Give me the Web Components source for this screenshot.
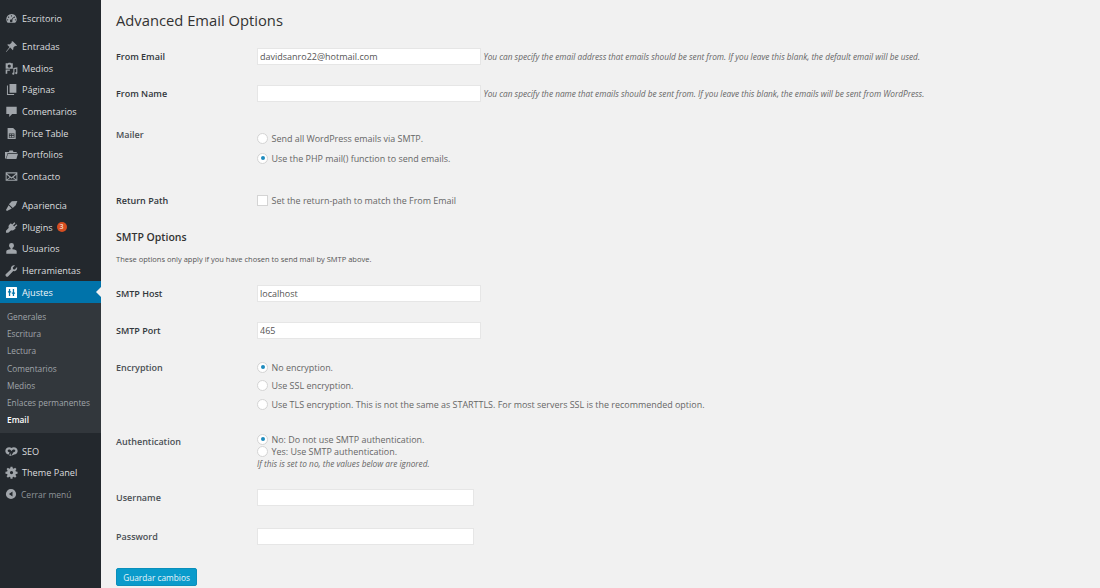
<!DOCTYPE html>
<html lang="es">
<head>
<meta charset="utf-8">
<title>Advanced Email Options</title>
<style>
  html, body { margin: 0; height: 100%; background: #f1f1f1; }
  body { font-family: "Open Sans", "Noto Sans", sans-serif; overflow: hidden; }
</style>
</head>
<body>
<admin-page>
  <admin-menu slot="menu">
    <menu-item icon="dashboard" style="margin-bottom:6px">Escritorio</menu-item>
    <menu-item icon="pin">Entradas</menu-item>
    <menu-item icon="media">Medios</menu-item>
    <menu-item icon="pages">Páginas</menu-item>
    <menu-item icon="comments">Comentarios</menu-item>
    <menu-item icon="doc">Price Table</menu-item>
    <menu-item icon="folder">Portfolios</menu-item>
    <menu-item icon="mail" style="margin-bottom:7px">Contacto</menu-item>
    <menu-item icon="brush">Apariencia</menu-item>
    <menu-item icon="plug" badge="3">Plugins</menu-item>
    <menu-item icon="user">Usuarios</menu-item>
    <menu-item icon="wrench">Herramientas</menu-item>
    <menu-item icon="settings" current>Ajustes</menu-item>
    <sub-menu>
      <sub-item>Generales</sub-item>
      <sub-item>Escritura</sub-item>
      <sub-item>Lectura</sub-item>
      <sub-item>Comentarios</sub-item>
      <sub-item>Medios</sub-item>
      <sub-item>Enlaces permanentes</sub-item>
      <sub-item current>Email</sub-item>
    </sub-menu>
    <menu-item icon="seo">SEO</menu-item>
    <menu-item icon="gear">Theme Panel</menu-item>
    <menu-item icon="collapse" muted>Cerrar menú</menu-item>
  </admin-menu>

  <form-heading level="1">Advanced Email Options</form-heading>
  <form-row label="From Email" height="37" bold>
    <text-field value="davidsanro22@hotmail.com"></text-field>
    <field-hint>You can specify the email address that emails should be sent from. If you leave this blank, the default email will be used.</field-hint>
  </form-row>
  <form-row label="From Name" height="38.5" bold>
    <text-field></text-field>
    <field-hint>You can specify the name that emails should be sent from. If you leave this blank, the emails will be sent from WordPress.</field-hint>
  </form-row>
  <form-row label="Mailer" height="69" stack label-top="12.5" top="15" option="20">
    <choice-option>Send all WordPress emails via SMTP.</choice-option>
    <choice-option checked>Use the PHP mail() function to send emails.</choice-option>
  </form-row>
  <form-row label="Return Path" height="37" bold>
    <choice-option square>Set the return-path to match the From Email</choice-option>
  </form-row>
  <form-heading level="2">SMTP Options</form-heading>
  <form-note>These options only apply if you have chosen to send mail by SMTP above.</form-note>
  <form-row label="SMTP Host" height="37" bold>
    <text-field value="localhost"></text-field>
  </form-row>
  <form-row label="SMTP Port" height="37" bold>
    <text-field value="465"></text-field>
  </form-row>
  <form-row label="Encryption" height="73.5" stack label-top="10" top="9.25" option="18.5">
    <choice-option checked>No encryption.</choice-option>
    <choice-option>Use SSL encryption.</choice-option>
    <choice-option>Use TLS encryption. This is not the same as STARTTLS. For most servers SSL is the recommended option.</choice-option>
  </form-row>
  <form-row label="Authentication" height="55.5" stack label-top="10.5" top="11" option="12">
    <choice-option checked>No: Do not use SMTP authentication.</choice-option>
    <choice-option>Yes: Use SMTP authentication.</choice-option>
    <field-hint block>If this is set to no, the values below are ignored.</field-hint>
  </form-row>
  <form-row label="Username" height="39">
    <text-field short></text-field>
  </form-row>
  <form-row label="Password" height="39">
    <text-field short></text-field>
  </form-row>
  <primary-button>Guardar cambios</primary-button>
</admin-page>

<script>
const ICONS = {
  dashboard: '<path fill-rule="evenodd" d="M10 3a8 8 0 0 0-8 8c0 2.200.9 4.200 2.300 5.600h11.400A8 8 0 0 0 10 3zm0 2a1 1 0 1 1 0 2 1 1 0 0 1 0-2zM5.500 7a1 1 0 1 1 0 2 1 1 0 0 1 0-2zm9 0a1 1 0 1 1 0 2 1 1 0 0 1 0-2zM4 11a1 1 0 1 1 0 2 1 1 0 0 1 0-2zm12 0a1 1 0 1 1 0 2 1 1 0 0 1 0-2zm-3.200-3.400.9.6-2.600 4a2 2 0 1 1-1-.6z"/>',
  pin: '<path d="M11.900 2 18.500 8.600l-1.800.9-1-.6-3 3c.5 1.400.3 2.700-.6 3.800L8 11.600 2 18.500l-.6-.6 5.600-7.200L3.300 7.400c1.100-.9 2.400-1.100 3.800-.6l3.300-3-.6-1z"/>',
  media: '<path fill-rule="evenodd" d="M1 2h3.500l1-1h3l1 1H12v8.500H1zm5.500 1.800a2.500 2.500 0 1 0 0 5 2.500 2.500 0 0 0 0-5zM1 11.500h6.500v2H3.500V18H1zM19 8v9a1.700 1.700 0 1 1-1.700-1.700V10.500l-2.800.7V18a1.700 1.700 0 1 1-1.700-1.700V9.200z"/>',
  pages: '<path d="M7 1.500h10.500V15H7zM4.500 4v13H14v1.500H3V4z"/>',
  comments: '<path d="M2 2.500h16V14h-7l-4.500 4.500V14H2z"/>',
  doc: '<path fill-rule="evenodd" d="M4 1.500h8.500L16.500 5.500V18.500H4zm2 8.500v6.500h8.500V10zm1 1h2.500v1.800H7zm3.500 0h3v1.800h-3zM7 13.800h2.500v1.800H7zm3.500 0h3v1.800h-3z"/>',
  folder: '<path d="M0 6h6l1-2h5l1 2h5v1.500H4L1.500 16H0zm4.500 3H20l-2.500 8H2z"/>',
  mail: '<path fill-rule="evenodd" d="M1 3.500h18v13H1zm2 1.800 7 5.700 7-5.700zm-.500 2v7.400l4.500-3.700zm15 0L13 11l4.500 3.700zM4 15h12l-4.400-3-1.600 1.300L8.400 12z"/>',
  brush: '<path d="M19 3 10.500 3.500 6 8l6 6 4.500-4.500zM5.500 9.500 1.500 17l1.500 1.500 7.500-4z"/>',
  plug: '<path d="M11 5.500 14.500 2 16 3.500 12.500 7l1.500 1.500L17.500 5 19 6.500 15.500 10l1 1-2 2c-1.700 1.700-3.500 2-5 1.200L5 18H1.500v-3l4.300-4.500C5 9 5.300 7.200 7 5.500l2-2z"/>',
  user: '<path d="M10 1.500a3.800 3.800 0 0 1 3.800 3.800c0 1.800-1 3.300-2.300 3.800V11c4 .3 6.500 1.300 6.500 3.200V18H2v-3.800C2 12.300 4.500 11.300 8.500 11V9.100C7.200 8.600 6.200 7.100 6.200 5.300A3.800 3.800 0 0 1 10 1.500z"/>',
  wrench: '<path d="M18.500 4.700c.6 1.700.2 3.600-1.100 4.900-1.300 1.300-3.100 1.700-4.700 1.200L5 18.800a2.100 2.100 0 0 1-3.500-3.500l7.700-7.300c-.5-1.600-.1-3.400 1.200-4.700 1.300-1.300 3.200-1.700 4.900-1.100L12 5.500l.5 2.500 2.500.5z"/>',
  settings: '<path fill-rule="evenodd" d="M2.500 1.500h15a1 1 0 0 1 1 1v15a1 1 0 0 1-1 1h-15a1 1 0 0 1-1-1v-15a1 1 0 0 1 1-1zM6 4.500V8H4.500v2H6v5.500h2V10h1.500V8H8V4.500zm6 0V10h-1.500v2H12v3.500h2V12h1.500v-2H14V4.500z"/>',
  seo: '<path d="M6.500 3.500C3.200 3.500.5 6 .5 9.200c0 3 2.300 5.300 5.300 5.500l1.200-3.400c-1.700-.1-2.900-1-2.900-2.300 0-1.200 1-2.100 2.400-2.100 1.500 0 2.700 1 3.500 2.600.8-1.600 2-2.600 3.500-2.600 1.400 0 2.400.9 2.400 2.100 0 1.300-1.200 2.200-2.900 2.300l-3.500 5.200-1.600-4.200L6.600 16.500h3.400l4.200-1.800c3-.2 5.300-2.500 5.300-5.500 0-3.200-2.700-5.700-6-5.700-1.400 0-2.600.5-3.500 1.300-.9-.8-2.100-1.300-3.500-1.300z"/>',
  gear: '<path fill-rule="evenodd" d="M8.500 1h3l.4 2.600 1.500.6 2.100-1.500 2.100 2.100-1.500 2.100.6 1.500 2.600.4v3l-2.600.4-.6 1.500 1.500 2.100-2.100 2.100-2.100-1.500-1.500.6-.4 2.600h-3l-.4-2.600-1.500-.6-2.100 1.500-2.100-2.100 1.500-2.100-.6-1.500-2.600-.4v-3l2.600-.4.6-1.500-1.500-2.100 2.100-2.100 2.100 1.500 1.500-.6zM10 7.500a2.500 2.500 0 1 0 0 5 2.500 2.500 0 0 0 0-5z"/>',
  collapse: '<path fill-rule="evenodd" d="M10 1.500a8.500 8.500 0 1 1 0 17 8.500 8.500 0 0 1 0-17zm2.500 4.500-6 4 6 4z"/>'
};

class AdminPage extends HTMLElement {
  connectedCallback() {
    this.attachShadow({ mode: 'open' });
    this.shadowRoot.innerHTML = `
      <style>
        :host { display: flex; height: 100vh; color: #444; }
        .side { flex: 0 0 101px; background: #23282d; }
        .content { flex: 1; padding: 0 0 0 15px; min-width: 0; }
      </style>
      <div class="side"><slot name="menu"></slot></div>
      <div class="content"><slot></slot></div>
    `;
  }
}

class AdminMenu extends HTMLElement {
  connectedCallback() {
    this.attachShadow({ mode: 'open' });
    this.shadowRoot.innerHTML = `
      <style>:host { display: block; padding-top: 8px; }</style>
      <slot></slot>
    `;
  }
}

class MenuItem extends HTMLElement {
  connectedCallback() {
    const icon = ICONS[this.getAttribute('icon')] || '';
    const badge = this.getAttribute('badge');
    this.attachShadow({ mode: 'open' });
    this.shadowRoot.innerHTML = `
      <style>
        :host { display: flex; align-items: center; height: 21.7px; position: relative; color: #dcdddf; font-size: 9.15px; }
        svg { width: 13px; height: 13px; margin: 0 4px 0 5px; fill: #a0a5aa; flex: none; }
        .badge {
          width: 10px; height: 10px; border-radius: 50%; background: #d54e21; color: #fff;
          font-size: 7px; line-height: 10px; text-align: center; margin-left: 4px;
        }
        :host([current]) { background: #0073aa; color: #f4f8fa; }
        :host([current]) svg { fill: #fff; }
        :host([current])::after {
          content: ""; position: absolute; right: 0; top: 50%; margin-top: -5px;
          border: 5px solid transparent; border-right-color: #f1f1f1; border-left: 0;
        }
        :host([muted]) { color: #8f9499; font-size: 8.5px; }
        :host([muted]) svg { width: 12px; height: 12px; margin-right: 4px; }
      </style>
      <svg viewBox="0 0 20 20">${icon}</svg>
      <span class="label"><slot></slot></span>
      ${badge ? `<span class="badge">${badge}</span>` : ''}
    `;
  }
}

class SubMenu extends HTMLElement {
  connectedCallback() {
    this.attachShadow({ mode: 'open' });
    this.shadowRoot.innerHTML = `
      <style>:host { display: block; background: #32373c; padding: 5px 0 5px; margin-bottom: 7px; }</style>
      <slot></slot>
    `;
  }
}

class SubItem extends HTMLElement {
  connectedCallback() {
    this.attachShadow({ mode: 'open' });
    this.shadowRoot.innerHTML = `
      <style>
        :host { display: block; height: 17.2px; line-height: 17.2px; padding-left: 7px; font-size: 8.3px; color: #a0a5aa; white-space: nowrap; }
        :host([current]) { color: #fff; font-weight: 600; }
      </style>
      <slot></slot>
    `;
  }
}

class FormHeading extends HTMLElement {
  connectedCallback() {
    this.attachShadow({ mode: 'open' });
    this.shadowRoot.innerHTML = `
      <style>
        :host { display: block; color: #333; }
        :host([level="1"]) { font-size: 14.75px; line-height: 20px; padding: 10px 0 7.5px; }
        :host([level="2"]) { font-size: 10.5px; font-weight: 600; line-height: 14px; padding: 11px 0 6px; }
      </style>
      <slot></slot>
    `;
  }
}

class FormNote extends HTMLElement {
  connectedCallback() {
    this.attachShadow({ mode: 'open' });
    this.shadowRoot.innerHTML = `
      <style>:host { display: block; font-size: 7.5px; line-height: 12px; padding: 3px 0 9.5px; color: #555; }</style>
      <slot></slot>
    `;
  }
}

class FormRow extends HTMLElement {
  connectedCallback() {
    const label = this.getAttribute('label');
    const top = this.getAttribute('top') || 0;
    const labelTop = this.getAttribute('label-top') || 0;
    const option = this.getAttribute('option') || 17;
    this.attachShadow({ mode: 'open' });
    this.shadowRoot.innerHTML = `
      <style>
        :host { display: grid; grid-template-columns: 141px 1fr; height: ${this.getAttribute('height')}px; align-items: center; --option-height: ${option}px; }
        .label { font-size: 9px; font-weight: 600; color: #4a4f54; }
        :host([bold]) .label { color: #32373c; }
        .field { display: flex; align-items: center; gap: 2.5px; }
        :host([stack]) { align-items: start; }
        :host([stack]) .field { flex-direction: column; align-items: flex-start; gap: 0; padding-top: ${top}px; }
        :host([stack]) .label { line-height: 17px; padding-top: ${labelTop}px; }
      </style>
      <div class="label">${label}</div>
      <div class="field"><slot></slot></div>
    `;
  }
}

class TextField extends HTMLElement {
  connectedCallback() {
    this.attachShadow({ mode: 'open' });
    this.shadowRoot.innerHTML = `
      <style>
        :host { display: block; flex: none; }
        input {
          display: block; box-sizing: border-box; width: 224px; height: 17px; padding: 0 2px; margin: 0;
          border: 1px solid #e6e6e6; background: #fff; color: #555;
          font: 9px "Open Sans", "Noto Sans", sans-serif; outline: none; border-radius: 0;
        }
        :host([short]) input { width: 217px; }
      </style>
      <input type="text">
    `;
    this.shadowRoot.querySelector('input').setAttribute('value', this.getAttribute('value') || '');
  }
}

class FieldHint extends HTMLElement {
  connectedCallback() {
    this.attachShadow({ mode: 'open' });
    this.shadowRoot.innerHTML = `
      <style>
        :host { display: inline-block; font-size: 8.28px; font-style: italic; color: #666; white-space: nowrap; }
        :host([block]) { display: block; line-height: 11px; margin-top: 1px; }
      </style>
      <slot></slot>
    `;
  }
}

class ChoiceOption extends HTMLElement {
  connectedCallback() {
    this.attachShadow({ mode: 'open' });
    this.shadowRoot.innerHTML = `
      <style>
        :host { display: flex; align-items: center; height: var(--option-height, 17px); font-size: 8.95px; color: #666; white-space: nowrap; }
        .box {
          box-sizing: border-box; width: 11px; height: 11px; margin-right: 3.5px; flex: none;
          border: 1px solid #d4d4d4; border-radius: 50%; background: #fff; display: grid; place-items: center;
        }
        :host([square]) .box { border-radius: 0; }
        :host([checked]) .box::after { content: ""; width: 4px; height: 4px; border-radius: 50%; background: #1e8cbe; }
      </style>
      <span class="box"></span><span><slot></slot></span>
    `;
  }
}

class PrimaryButton extends HTMLElement {
  connectedCallback() {
    this.attachShadow({ mode: 'open' });
    this.shadowRoot.innerHTML = `
      <style>
        :host { display: inline-block; margin-top: 12.5px; }
        button {
          display: block; width: 81px; height: 18px; padding: 0; border: 1px solid #0a8fbb; border-radius: 2px;
          background: #0a9bcb; color: #e8f5fa; font: 8.3px "Open Sans", "Noto Sans", sans-serif;
        }
      </style>
      <button type="button"><slot></slot></button>
    `;
  }
}

customElements.define('admin-page', AdminPage);
customElements.define('admin-menu', AdminMenu);
customElements.define('menu-item', MenuItem);
customElements.define('sub-menu', SubMenu);
customElements.define('sub-item', SubItem);
customElements.define('form-heading', FormHeading);
customElements.define('form-note', FormNote);
customElements.define('form-row', FormRow);
customElements.define('text-field', TextField);
customElements.define('field-hint', FieldHint);
customElements.define('choice-option', ChoiceOption);
customElements.define('primary-button', PrimaryButton);
</script>
</body>
</html>
